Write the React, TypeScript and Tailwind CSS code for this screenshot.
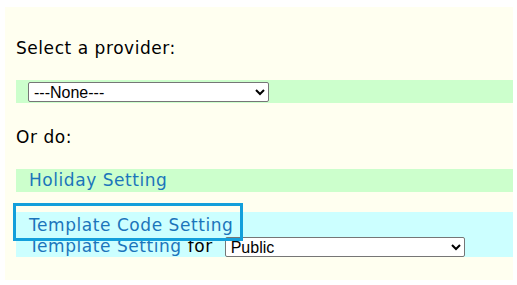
import { useState } from "react";

const linkClass = "text-[#1b75bb] no-underline";
const selectClass =
  "h-[20px] rounded-[2px] border border-[#767676] bg-white pl-[1px] font-['Liberation_Sans',Arial,sans-serif] text-[16px] leading-[18px] tracking-normal text-black";

export default function App() {
  const [provider, setProvider] = useState("");
  const [scope, setScope] = useState("public");

  return (
    <div className="min-h-screen bg-white pt-[7px] pl-[5px] pr-[4px] font-['DejaVu_Sans',sans-serif] text-[17px] tracking-[0.55px] text-black">
      <div className="h-[273px] bg-[#fffff0] pl-[11px]">
        <p className="pt-[31px] leading-[20px]">Select a provider:</p>

        {/* provider picker */}
        <div className="mt-[22px] h-[23px] bg-[#ccffcc] pl-[12px] pt-[2px]">
          <select
            value={provider}
            onChange={(e) => setProvider(e.target.value)}
            className={`block w-[241px] ${selectClass}`}
          >
            <option value="">---None---</option>
          </select>
        </div>

        <p className="mt-[24px] leading-[20px]">Or do:</p>

        <div className="mt-[22px] h-[23px] bg-[#ccffcc] pl-[13px] leading-[23px]">
          <a href="#" className={linkClass}>
            Holiday Setting
          </a>
        </div>

        {/* templates */}
        <div className="relative mt-[20px] h-[45px] bg-[#ccffff] pl-[13px] pt-[3px]">
          <div className="leading-[21px]">
            <a href="#" className={linkClass}>
              Template Code Setting
            </a>
          </div>
          <div className="flex h-[21px] items-center">
            <a href="#" className={`${linkClass} leading-[21px]`}>
              Template Setting
            </a>
            <span className="ml-[6px] leading-[21px]">for</span>
            <select
              value={scope}
              onChange={(e) => setScope(e.target.value)}
              className={`ml-[12px] w-[240px] self-end ${selectClass}`}
            >
              <option value="public">Public</option>
            </select>
          </div>
          {/* focus ring on the code-setting link */}
          <span className="pointer-events-none absolute left-[-3px] top-[-9px] h-[38px] w-[230px] border-[3px] border-[#139fdb]" />
        </div>
      </div>
    </div>
  );
}
